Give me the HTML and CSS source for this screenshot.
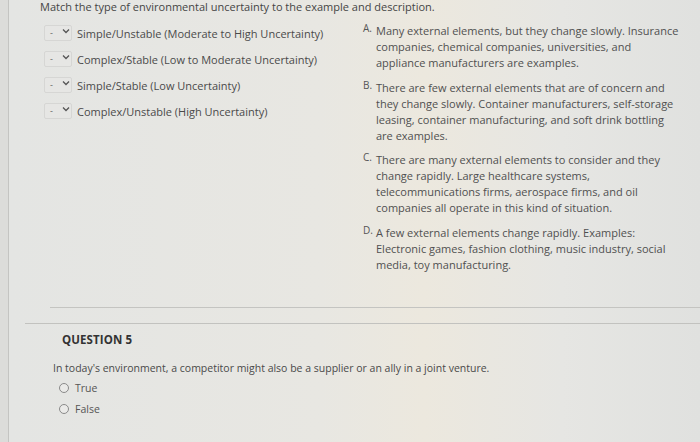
FILE: index.html
```html
<!DOCTYPE html>
<html>
<head>
<meta charset="utf-8">
<link rel="stylesheet" href="styles.css">
</head>
<body>
<div class="frame">
  <div class="q4">
    <p class="prompt">Match the type of environmental uncertainty to the example and description.</p>
    <div class="match">
      <div class="left">
        <div class="row"><span class="sel"><span class="dash">-</span><svg class="chev" viewBox="0 0 8 6" width="8" height="6"><path d="M1 1.5 L4 4.5 L7 1.5" fill="none" stroke="#555" stroke-width="1.3"/></svg></span><span class="lbl">Simple/Unstable (Moderate to High Uncertainty)</span></div>
        <div class="row"><span class="sel"><span class="dash">-</span><svg class="chev" viewBox="0 0 8 6" width="8" height="6"><path d="M1 1.5 L4 4.5 L7 1.5" fill="none" stroke="#555" stroke-width="1.3"/></svg></span><span class="lbl">Complex/Stable (Low to Moderate Uncertainty)</span></div>
        <div class="row"><span class="sel"><span class="dash">-</span><svg class="chev" viewBox="0 0 8 6" width="8" height="6"><path d="M1 1.5 L4 4.5 L7 1.5" fill="none" stroke="#555" stroke-width="1.3"/></svg></span><span class="lbl">Simple/Stable (Low Uncertainty)</span></div>
        <div class="row"><span class="sel"><span class="dash">-</span><svg class="chev" viewBox="0 0 8 6" width="8" height="6"><path d="M1 1.5 L4 4.5 L7 1.5" fill="none" stroke="#555" stroke-width="1.3"/></svg></span><span class="lbl">Complex/Unstable (High Uncertainty)</span></div>
      </div>
      <div class="right">
        <div class="opt"><span class="let">A.</span><p>Many external elements, but they change slowly. Insurance companies, chemical companies, universities, and appliance manufacturers are examples.</p></div>
        <div class="opt"><span class="let">B.</span><p>There are few external elements that are of concern and they change slowly. Container manufacturers, self-storage leasing, container manufacturing, and soft drink bottling are examples.</p></div>
        <div class="opt"><span class="let">C.</span><p>There are many external elements to consider and they change rapidly. Large healthcare systems, telecommunications firms, aerospace firms, and oil companies all operate in this kind of situation.</p></div>
        <div class="opt"><span class="let">D.</span><p>A few external elements change rapidly. Examples: Electronic games, fashion clothing, music industry, social media, toy manufacturing.</p></div>
      </div>
    </div>
  </div>
  <div class="rule1"></div>
  <div class="rule2"></div>
  <div class="q5">
    <h2>QUESTION 5</h2>
    <p class="qtext">In today's environment, a competitor might also be a supplier or an ally in a joint venture.</p>
    <div class="radio"><span class="circle"></span>True</div>
    <div class="radio"><span class="circle"></span>False</div>
  </div>
</div>
</body>
</html>
```

FILE: styles.css
```css
html, body {
  margin: 0;
  padding: 0;
}
body {
  width: 700px;
  height: 442px;
  overflow: hidden;
  background: #dcdcda;
  font-family: "Open Sans", "Liberation Sans", sans-serif;
  font-size: 11px;
  color: #4b4b4b;
}
.frame {
  margin-left: 8px;
  height: 442px;
  border-left: 1px solid #c4c4c2;
  background: linear-gradient(90deg, #e4e5e3 0%, #e8e7e2 45%, #ece8de 60%, #e6e6e3 80%, #e0e1df 100%);
}
.q4 {
  padding-left: 31px;
  height: 307px;
}
.prompt {
  margin: 0;
  line-height: 14px;
  color: #454545;
}
.match {
  display: flex;
  margin-top: 8px;
}
.left {
  width: 319px;
  padding-left: 4px;
  padding-top: 2px;
}
.row {
  display: flex;
  align-items: center;
  height: 18px;
  margin-bottom: 8px;
}
.sel {
  display: flex;
  align-items: center;
  width: 28px;
  height: 16px;
  box-sizing: border-box;
  border: 1px solid #d6d6d4;
  border-radius: 2px;
  background: #e6e6e4;
  padding-left: 5px;
  margin-right: 5px;
}
.dash {
  font-size: 9px;
  color: #666;
  line-height: 10px;
}
.chev {
  margin-left: 9px;
  margin-top: -4px;
}
.lbl {
  color: #4a4a4a;
}
.right {
  width: 320px;
}
.opt {
  display: flex;
  margin-bottom: 7.5px;
}
.let {
  width: 13px;
  font-size: 10px;
  line-height: 12px;
  color: #555;
  flex: none;
}
.opt p {
  margin: 1px 0 0 0;
  width: 305px;
  line-height: 16px;
  color: #505050;
}
.rule1 {
  height: 0;
  border-top: 1px solid #c4c4c1;
  margin-left: 41px;
}
.rule2 {
  height: 0;
  border-top: 1px solid #c2c2bf;
  margin-left: 16px;
  margin-top: 15px;
}
.q5 {
  padding-left: 44px;
}
h2 {
  margin: 0;
  padding-top: 8px;
  padding-left: 9px;
  font-size: 11.5px;
  font-weight: 700;
  color: #333;
  line-height: 16px;
  letter-spacing: 0.1px;
}
.qtext {
  margin: 0;
  margin-top: 13px;
  line-height: 14px;
  color: #4a4a4a;
  font-size: 10.5px;
}
.radio {
  display: flex;
  align-items: center;
  height: 14px;
  margin-top: 7px;
  padding-left: 6px;
  font-size: 10.5px;
  color: #555;
}
.radio:first-of-type {
  margin-top: 6px;
}
.circle {
  width: 10px;
  height: 10px;
  border: 1px solid #8a8a8a;
  border-radius: 50%;
  margin-right: 6px;
  box-sizing: border-box;
  background: #eaeae8;
}
```
